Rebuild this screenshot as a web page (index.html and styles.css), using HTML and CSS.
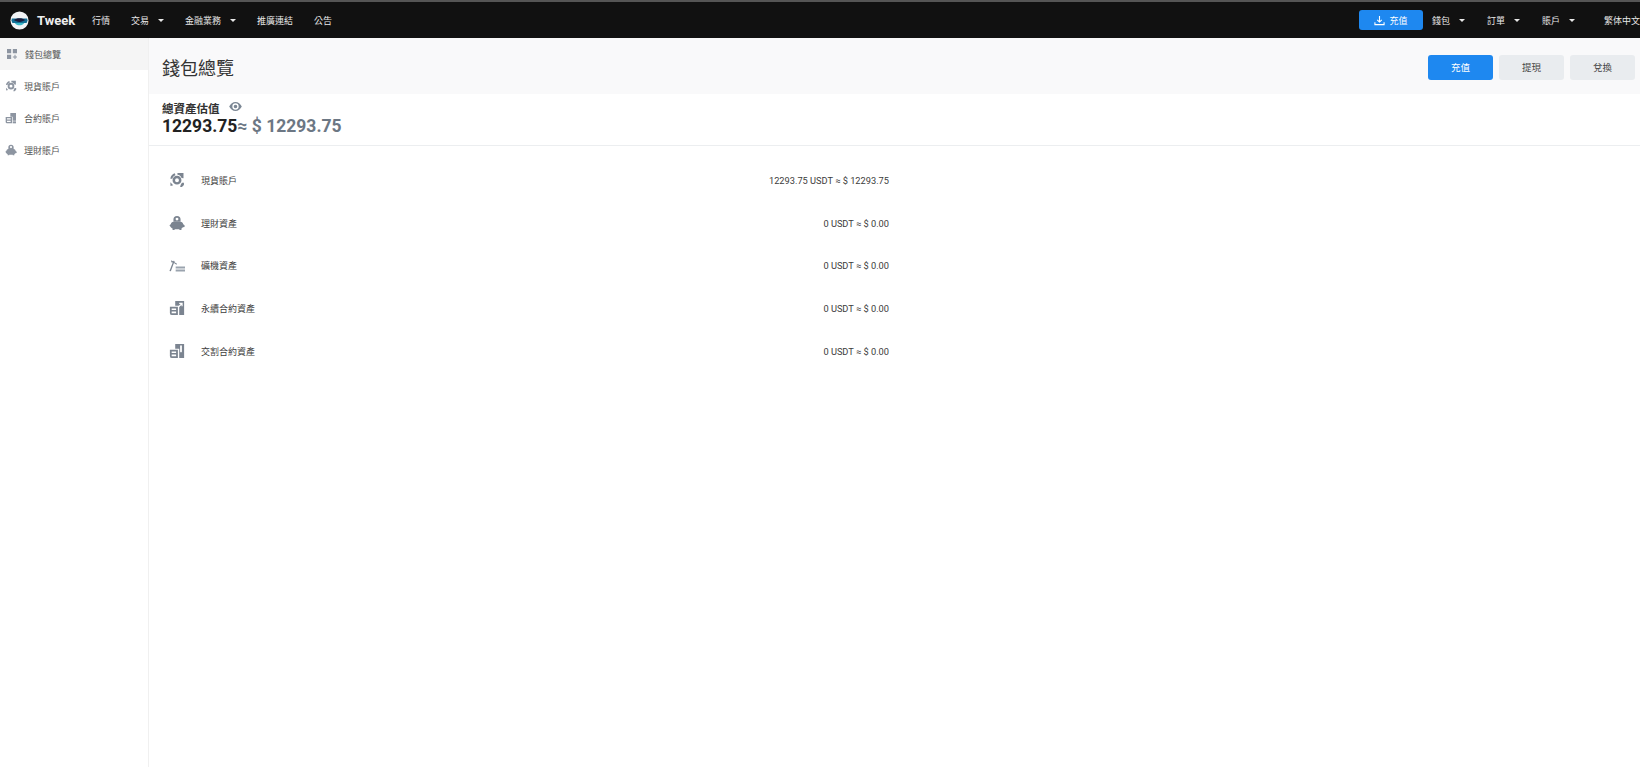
FILE: index.html
```html
<!DOCTYPE html>
<html lang="zh-Hant">
<head>
    <meta charset="UTF-8">
    <meta name="viewport" content="width=device-width, initial-scale=1.0">
    <title>Tweek 錢包總覽</title>
    <link rel="stylesheet" href="styles.css">
</head>
<body>

<svg class="defs" width="0" height="0">
    <symbol id="ic-spot" viewBox="0 0 18 18">
        <path d="M9 4.200a5 5 0 1 1 0 10 5 5 0 0 1 0-10zm0 2.800a2.200 2.200 0 1 0 0 4.400 2.200 2.200 0 0 0 0-4.400z" fill-rule="evenodd"/>
        <path d="M1.500 7.500C1.800 4.500 3.800 2.300 6.500 1.500L7.300 3.600C5.500 4.200 4.200 5.600 3.800 7.500z"/>
        <path d="M9.500 1h6.800v6l-2.200-.3C13.500 4.800 11.800 3.400 9.500 3.200z"/>
        <path d="M14.500 12h2.300v2.500l-2.300 2.300h-2l.6-2.300z"/>
        <path d="M1.500 11.500l3.200 3.500-3 .8z"/>
    </symbol>
    <symbol id="ic-vault" viewBox="0 0 18 18">
        <path d="M9 1a4 4 0 0 1 4 4v2.500H5V5a4 4 0 0 1 4-4zm0 2a1.600 1.600 0 1 0 0 3.200A1.600 1.600 0 0 0 9 3z" fill-rule="evenodd"/>
        <path d="M5 7.500h8c1.600 0 2.700 1.300 3 3l1.500 1v2l-1.900.4c-.5.700-1 1.100-1.600 1.400V17h-2.300v-1H6.300v1H4v-1.700C2.500 14.500 1.500 13 .5 11.500l1.500-1c.3-1.700 1.400-3 3-3z"/>
    </symbol>
    <symbol id="ic-contract" viewBox="0 0 18 18">
        <path d="M8 1.500h8.500V13H11.500V7H8z"/>
        <path d="M1 7.500h9.500V17H3a2 2 0 0 1-2-2zm2 2v1.700h5.500V9.500zm0 3.500v2h5.500v-2z" fill-rule="evenodd"/>
        <path d="M11.500 14h5v3h-5z"/>
    </symbol>
    <symbol id="ic-perp" viewBox="0 0 18 18">
        <path d="M7 1h10v16H11.500V6.500H7z"/>
        <path d="M1 7.500h9V17H3.500A2.500 2.500 0 0 1 1 14.500zm2 2v1.700h5V9.500zm0 3.500v2h5v-2z" fill-rule="evenodd"/>
        <path d="M10.500 8 14 4.500M11.500 3.800h3.200V7" fill="none" stroke="#fff" stroke-width="1.300"/>
    </symbol>
    <symbol id="ic-delivery" viewBox="0 0 18 18">
        <path d="M7 1h10v16H11.500V6.500H7z"/>
        <path d="M1 7.500h9V17H3.500A2.500 2.500 0 0 1 1 14.500zm2 2v1.700h5V9.500zm0 3.500v2h5v-2z" fill-rule="evenodd"/>
        <path d="M13.500 3.500v6" fill="none" stroke="#fff" stroke-width="2" stroke-linecap="round"/>
    </symbol>
</svg>

<header class="topbar">
    <a class="logo">
        <svg class="logo-mark" viewBox="0 0 20 20">
            <circle cx="10" cy="10" r="9.500" fill="#f2f4f6"/>
            <path d="M2 8h16l.5 2-1 2.500h-15L1.500 10z" fill="#136f96"/>
            <path d="M4 9.500C6 8 7.500 7.500 10 7.500s4 .5 6 2c-2 1-3.500 2-6 2s-4-1-6-2z" fill="#1b1b3a"/>
            <path d="M5 12.500h10c-1 1.500-3 2.500-5 2.500s-4-1-5-2.500z" fill="#39b6c8"/>
        </svg>
        <span>Tweek</span>
    </a>
    <nav class="nav">
        <a>行情</a>
        <a class="has-menu">交易</a>
        <a class="has-menu">金融業務</a>
        <a>推廣連結</a>
        <a>公告</a>
    </nav>
    <div class="nav-right">
        <a class="top-deposit">
            <svg viewBox="0 0 12 12" width="11" height="11"><path d="M6 1v6.500M3.500 5.200 6 7.700l2.500-2.500M1 8v2.500h10V8" fill="none" stroke="#fff" stroke-width="1.200"/></svg>
            充值
        </a>
        <a class="has-menu">錢包</a>
        <a class="has-menu">訂單</a>
        <a class="has-menu">賬戶</a>
        <a class="lang">繁体中文</a>
    </div>
</header>

<div class="layout">
    <aside class="sidebar">
        <a class="side-item active">
            <svg class="side-icon overview" viewBox="0 0 12 12"><path d="M0 0h5v5H0zM7 0h5v5H7zM0 7h5v5H0zM9 7h1.200v1.900H12v1.200h-1.800V12H9v-1.900H7V8.900h2z"/></svg>
            <span>錢包總覽</span>
        </a>
        <a class="side-item"><svg class="side-icon"><use href="#ic-spot"/></svg><span>現貨賬戶</span></a>
        <a class="side-item"><svg class="side-icon"><use href="#ic-contract"/></svg><span>合約賬戶</span></a>
        <a class="side-item"><svg class="side-icon"><use href="#ic-vault"/></svg><span>理財賬戶</span></a>
    </aside>

    <main class="content">
        <div class="page-head">
            <h1>錢包總覽</h1>
            <div class="page-actions">
                <a class="btn btn-primary">充值</a>
                <a class="btn">提現</a>
                <a class="btn">兌換</a>
            </div>
        </div>

        <section class="total">
            <div class="total-label">
                總資產估值
                <svg viewBox="0 0 14 10" width="13" height="9"><path d="M7 0c3 0 5.500 2 7 5-1.500 3-4 5-7 5S1.500 8 0 5c1.500-3 4-5 7-5zm0 1.500a3.500 3.500 0 1 0 0 7 3.500 3.500 0 0 0 0-7zM7 3a2 2 0 1 1 0 4 2 2 0 0 1 0-4z" fill="#7b8794" fill-rule="evenodd"/></svg>
            </div>
            <div class="total-value">12293.75<span>≈ $ 12293.75</span></div>
        </section>

        <ul class="asset-list">
            <li><svg class="asset-icon"><use href="#ic-spot"/></svg><span class="asset-name">現貨賬戶</span><span class="asset-amount">12293.75 USDT ≈ $ 12293.75</span></li>
            <li><svg class="asset-icon"><use href="#ic-vault"/></svg><span class="asset-name">理財資產</span><span class="asset-amount">0 USDT ≈ $ 0.00</span></li>
            <li>
                <svg class="asset-icon" viewBox="0 0 18 18">
                    <path d="M.5 14.500 5 3l1.400.5-4.300 11.500z"/>
                    <path d="M2.500 2.500l6.500 4-.6 1C6.500 6 4.500 5 2.500 4.800z"/>
                    <path d="M7.500 9.500H18v2.200H7.500zM7.500 13H18v2.200H7.500z" fill="#9aa3ae"/>
                </svg>
                <span class="asset-name">礦機資產</span><span class="asset-amount">0 USDT ≈ $ 0.00</span>
            </li>
            <li><svg class="asset-icon"><use href="#ic-perp"/></svg><span class="asset-name">永續合約資產</span><span class="asset-amount">0 USDT ≈ $ 0.00</span></li>
            <li><svg class="asset-icon"><use href="#ic-delivery"/></svg><span class="asset-name">交割合約資產</span><span class="asset-amount">0 USDT ≈ $ 0.00</span></li>
        </ul>
    </main>
</div>

</body>
</html>
```

FILE: styles.css
```css
* { box-sizing: border-box; }
html, body { height: 100%; }
body { margin: 0; background: #fff; color: #333; font-family: Roboto, "Noto Sans CJK TC", sans-serif; overflow: hidden; }
a { color: inherit; text-decoration: none; }
.defs { display: block; height: 0; }

/* Top bar */
.topbar { height: 38px; display: flex; align-items: center; padding-left: 10px; background: #111; border-top: 2px solid #555; color: #e8e8e8; font-size: 9px; }
.logo { display: flex; align-items: center; gap: 8px; width: 82px; color: #eee; font-size: 13px; font-weight: 700; }
.logo-mark { width: 19px; height: 19px; }
.nav { display: flex; align-items: center; gap: 21px; }
.nav-right { margin-left: auto; display: flex; align-items: center; gap: 22px; }
.has-menu::after { content: ""; display: inline-block; margin-left: 9px; vertical-align: 2px; border: 3px solid transparent; border-top: 3px solid #e8e8e8; border-bottom: 0; }
.top-deposit { width: 64px; height: 20px; margin-right: -13px; display: flex; align-items: center; justify-content: center; gap: 4px; border-radius: 3px; background: #1e88f0; color: #fff; }
.lang { width: 36px; margin-left: 7px; white-space: nowrap; }

/* Layout */
.layout { display: flex; height: calc(100vh - 38px); }
.sidebar { width: 149px; flex-shrink: 0; border-right: 1px solid #f0f0f0; color: #555; font-size: 9px; }
.side-item { height: 32px; display: flex; align-items: center; gap: 7px; padding-left: 5px; }
.side-item.active { padding-left: 7px; gap: 8px; background: #f5f5f5; }
.side-icon { width: 12px; height: 12px; fill: #8d95a1; }
.side-icon.overview { width: 10px; height: 10px; }
.content { flex: 1; min-width: 0; }

.page-head { height: 56px; display: flex; align-items: center; justify-content: space-between; padding: 2px 5px 0 13px; background: #f9f9fa; }
h1 { margin: 0; font-size: 18px; font-weight: 400; color: #333; }
.page-actions { display: flex; gap: 6px; }
.btn { width: 65px; height: 25px; display: flex; align-items: center; justify-content: center; border-radius: 3px; background: #e9ecef; color: #444; font-size: 9.500px; }
.btn-primary { background: #1e88f0; color: #fff; }

.total { height: 52px; padding: 8px 13px 0; border-bottom: 1px solid #eceef0; }
.total-label { display: flex; align-items: center; gap: 9px; font-size: 11.500px; font-weight: 700; line-height: 14px; color: #333; }
.total-label svg { margin-top: -5px; }
.total-value { font-size: 17.500px; font-weight: 700; line-height: 20px; color: #222; }
.total-value span { color: #6c7784; }

.asset-list { width: 740px; margin: 13px 0 0; padding: 0; list-style: none; }
.asset-list li { height: 42.700px; display: flex; align-items: center; padding-left: 20px; font-size: 9px; color: #3c3c3c; }
.asset-icon { width: 16px; height: 16px; fill: #7b8490; }
.asset-name { margin-left: 16px; }
.asset-amount { margin-left: auto; font-size: 9.250px; }
```
